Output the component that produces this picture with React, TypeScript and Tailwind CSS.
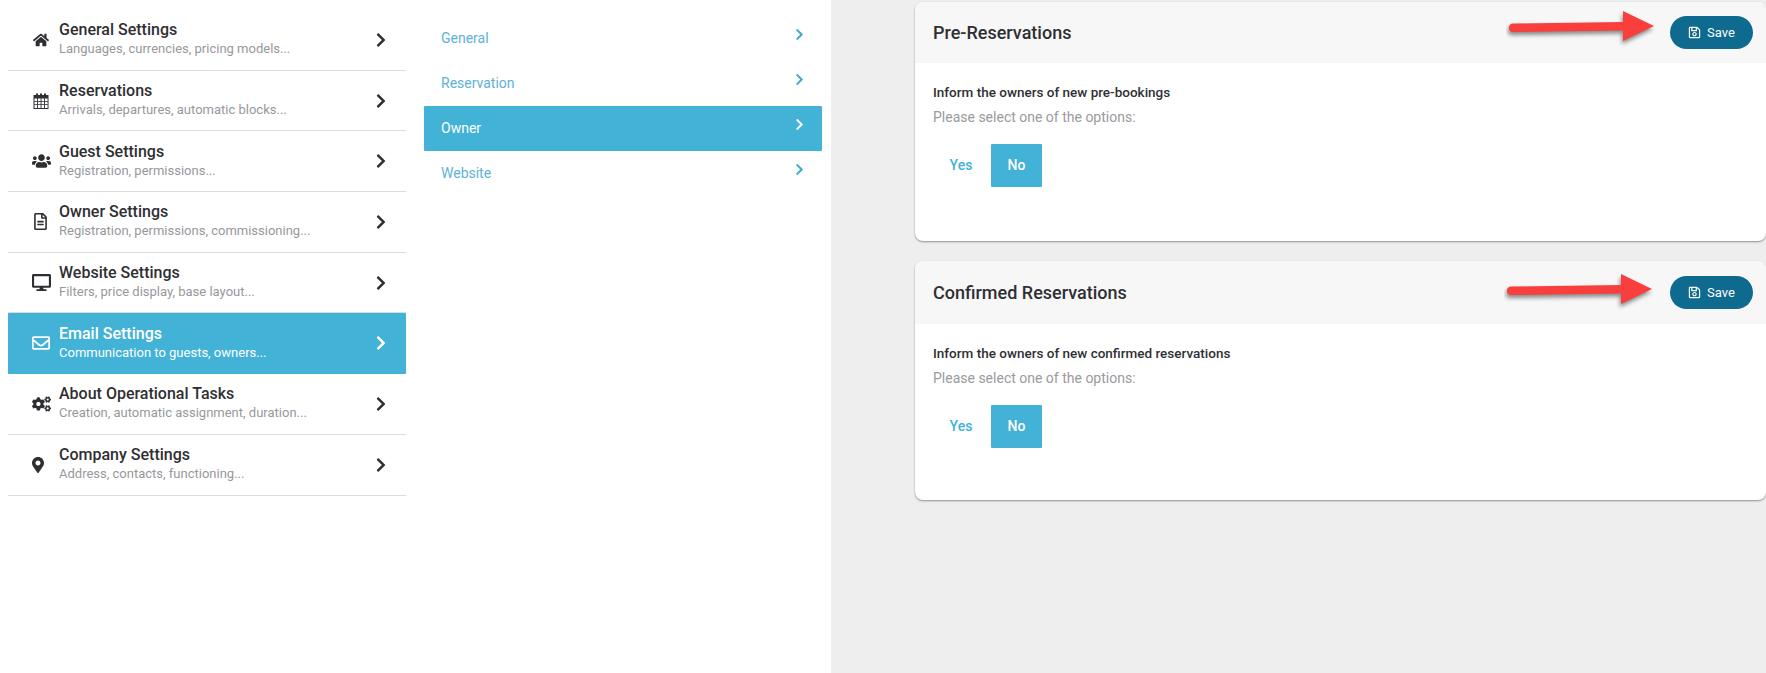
import React from "react";
import {
  FaHome,
  FaUsers,
  FaRegFileAlt,
  FaDesktop,
  FaRegEnvelope,
  FaCogs,
  FaMapMarkerAlt,
  FaChevronRight,
  FaRegSave,
} from "react-icons/fa";

function CalendarIcon({ className }: { className?: string }) {
  return (
    <svg viewBox="0 0 16 16" className={className} fill="currentColor">
      <path d="M3 0.5h2v2.2H3zM7 0.5h2v2.2H7zM11 0.5h2v2.2h-2z" />
      <path
        fillRule="evenodd"
        d="M0.5 2h15v14h-15zM1.5 5.5v2.4h2.6V5.5zM5 5.5v2.4h2.6V5.5zM8.5 5.5v2.4h2.6V5.5zM12 5.5v2.4h2.6V5.5zM1.5 8.8v2.4h2.6V8.8zM5 8.8v2.4h2.6V8.8zM8.5 8.8v2.4h2.6V8.8zM12 8.8v2.4h2.6V8.8zM1.5 12.1V15h2.6v-2.9zM5 12.1V15h2.6v-2.9zM8.5 12.1V15h2.6v-2.9zM12 12.1V15h2.6v-2.9z"
      />
    </svg>
  );
}

const items = [
  { title: "General Settings", sub: "Languages, currencies, pricing models...", icon: <FaHome className="w-[16px] h-[16px] ml-[25px]" /> },
  { title: "Reservations", sub: "Arrivals, departures, automatic blocks...", icon: <CalendarIcon className="w-[16px] h-[16px] ml-[25px]" /> },
  { title: "Guest Settings", sub: "Registration, permissions...", icon: <FaUsers className="w-[19px] h-[16px] ml-[24px]" /> },
  { title: "Owner Settings", sub: "Registration, permissions, commissioning...", icon: <FaRegFileAlt className="w-[15px] h-[17px] ml-[25px]" /> },
  { title: "Website Settings", sub: "Filters, price display, base layout...", icon: <FaDesktop className="w-[19px] h-[17px] ml-[24px]" /> },
  { title: "Email Settings", sub: "Communication to guests, owners...", icon: <FaRegEnvelope className="w-[18px] h-[18px] ml-[24px]" />, active: true },
  { title: "About Operational Tasks", sub: "Creation, automatic assignment, duration...", icon: <FaCogs className="w-[19px] h-[16px] ml-[24px]" /> },
  { title: "Company Settings", sub: "Address, contacts, functioning...", icon: <FaMapMarkerAlt className="w-[12px] h-[16px] ml-[24px]" /> },
];

const subItems = [
  { label: "General" },
  { label: "Reservation" },
  { label: "Owner", active: true },
  { label: "Website" },
];

function Arrow({ tilt }: { tilt: string }) {
  return (
    <svg viewBox="0 0 160 46" className={`w-[160px] h-[46px] ${tilt}`}>
      <path d="M12 22 L124 20.5 L124 35 L155 25 L124 12 L124 20 Z" fill="#000" opacity="0" />
      <g className="drop-shadow-[-1px_3px_2px_rgba(0,0,0,0.45)]">
        <path
          d="M7 18.5 L117 17 L117 6 L148 21 L117 36 L117 25.5 L7 27 A4.2 4.2 0 0 1 7 18.5 Z"
          fill="#f93e3e"
        />
      </g>
    </svg>
  );
}

function Card({
  title,
  question,
  headerH,
  bodyH,
  arrow,
}: {
  title: string;
  question: string;
  headerH: string;
  bodyH: string;
  arrow: React.ReactNode;
}) {
  return (
    <section className={`relative rounded-[8px] bg-white shadow-[0_1px_2px_rgba(0,0,0,0.4)] ${bodyH}`}>
      <header className={`flex items-center justify-between rounded-t-[8px] bg-[#f7f7f7] pl-[18px] pr-[13px] ${headerH}`}>
        <h2 className="text-[18px] font-medium text-[#2f2f33]">{title}</h2>
        <button className="flex h-[33px] w-[83px] items-center justify-center gap-[6px] rounded-full bg-[#0e6a8e] text-[13px] text-white">
          <FaRegSave className="h-[13px] w-[13px]" />
          Save
        </button>
      </header>
      {arrow}
      <div className="pl-[18px] pt-[19px]">
        <p className="text-[13.5px] font-medium leading-[20px] text-[#2f2f33]">{question}</p>
        <p className="mt-[5px] text-[14px] leading-[20px] text-[#9a9a9e]">Please select one of the options:</p>
        <div className="mt-[17px] flex">
          <span className="flex h-[43px] w-[58px] items-center justify-center pr-[2px] text-[14px] font-medium text-[#43b2d7]">Yes</span>
          <span className="flex h-[43px] w-[51px] items-center justify-center rounded-[1px] bg-[#43b2d7] text-[14px] font-medium text-white">No</span>
        </div>
      </div>
    </section>
  );
}

export default function App() {
  return (
    <div className="flex h-[673px] w-[1766px] overflow-hidden bg-[#eeeeee] font-['Roboto',sans-serif]">
      <aside className="flex h-full w-[831px] shrink-0 bg-white">
        <nav className="ml-[8px] w-[398px] shrink-0 pt-[10px]">
          {items.map((it) => (
            <div
              key={it.title}
              className={`flex h-[60.7px] items-center border-b ${
                it.active
                  ? "border-[#43b2d7] rounded-[1px] bg-[#43b2d7] text-white"
                  : "border-[#dcdcdc] text-[#2f2f33]"
              }`}
            >
              <div className="w-[51px] shrink-0">{it.icon}</div>
              <div className="min-w-0 flex-1 pb-[1px]">
                <div className="text-[16px] font-medium leading-[20px]">{it.title}</div>
                <div className={`text-[13px] leading-[18px] ${it.active ? "text-white" : "text-[#98989c]"}`}>{it.sub}</div>
              </div>
              <FaChevronRight className={`mr-[17px] h-[16px] w-[16px] ${it.active ? "text-white" : "text-[#2f2f33]"}`} />
            </div>
          ))}
        </nav>
        <nav className="ml-[18px] w-[398px] shrink-0 pt-[16px]">
          {subItems.map((s) => (
            <div
              key={s.label}
              className={`flex h-[45px] items-center justify-between pl-[17px] pr-[16px] ${
                s.active ? "rounded-[1px] bg-[#43b2d7] text-white" : "text-[#5eb2d6]"
              }`}
            >
              <span className="text-[14px]">{s.label}</span>
              <FaChevronRight className={`mb-[9px] h-[13px] w-[13px] ${s.active ? "text-white" : "text-[#43a9cf]"}`} />
            </div>
          ))}
        </nav>
      </aside>
      <main className="flex min-w-0 flex-1 flex-col gap-[20px] pl-[84px] pt-[2px]">
        <Card
          title="Pre-Reservations"
          question="Inform the owners of new pre-bookings"
          headerH="h-[61px]"
          bodyH="h-[239px]"
          arrow={
            <div className="absolute left-[591px] top-[3px]">
              <Arrow tilt="" />
            </div>
          }
        />
        <Card
          title="Confirmed Reservations"
          question="Inform the owners of new confirmed reservations"
          headerH="h-[63px]"
          bodyH="h-[239px]"
          arrow={
            <div className="absolute left-[589px] top-[7px]">
              <Arrow tilt="" />
            </div>
          }
        />
      </main>
    </div>
  );
}
